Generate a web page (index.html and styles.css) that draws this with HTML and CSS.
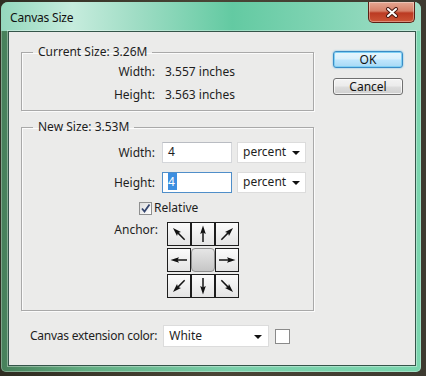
FILE: index.html
```html
<!DOCTYPE html>
<html lang="en">
<head>
    <meta charset="UTF-8">
    <title>Canvas Size</title>
    <link rel="stylesheet" href="styles.css">
</head>
<body>
    <!-- arrow shape used by the anchor grid -->
    <svg class="defs" width="0" height="0">
        <symbol id="arrow" viewBox="0 0 22 22">
            <line x1="11" y1="19" x2="11" y2="8" stroke="#151515" stroke-width="1.5"/>
            <polygon points="11,2.5 8.2,11 11,9.5 13.8,11" fill="#111"/>
        </symbol>
    </svg>

    <div class="window">
        <div class="titlebar">
            <span class="title">Canvas Size</span>
            <button class="close">
                <svg width="14" height="11" viewBox="0 0 14 11">
                    <path d="M3 2 L11 9 M11 2 L3 9" stroke="#4a1a12" stroke-width="4" stroke-linecap="round"/>
                    <path d="M3 2 L11 9 M11 2 L3 9" stroke="#fff" stroke-width="2" stroke-linecap="round"/>
                </svg>
            </button>
        </div>

        <div class="client">
            <div class="main">
                <!-- Current Size -->
                <fieldset class="group current">
                    <legend>Current Size: 3.26M</legend>
                    <div class="info-row"><span class="label">Width:</span><span class="value">3.557 inches</span></div>
                    <div class="info-row"><span class="label">Height:</span><span class="value">3.563 inches</span></div>
                </fieldset>

                <!-- New Size -->
                <fieldset class="group new">
                    <legend>New Size: 3.53M</legend>
                    <div class="field-row">
                        <span class="label">Width:</span>
                        <div class="input">4</div>
                        <div class="select">percent<span class="caret"></span></div>
                    </div>
                    <div class="field-row">
                        <span class="label">Height:</span>
                        <div class="input focused"><span class="selected">4</span></div>
                        <div class="select">percent<span class="caret"></span></div>
                    </div>
                    <div class="check-row">
                        <span class="checkbox">
                            <svg width="11" height="11" viewBox="0 0 11 11">
                                <polyline points="2,5.5 4.5,8.5 9.5,1.5" fill="none" stroke="#34456e" stroke-width="1.8"/>
                            </svg>
                        </span>
                        <span>Relative</span>
                    </div>
                    <div class="anchor-row">
                        <span class="label anchor-label">Anchor:</span>
                        <div class="anchor">
                            <div class="cell"><svg><use href="#arrow" transform="rotate(-45 11 11)"/></svg></div>
                            <div class="cell"><svg><use href="#arrow"/></svg></div>
                            <div class="cell"><svg><use href="#arrow" transform="rotate(45 11 11)"/></svg></div>
                            <div class="cell"><svg><use href="#arrow" transform="rotate(-90 11 11)"/></svg></div>
                            <div class="cell center"></div>
                            <div class="cell"><svg><use href="#arrow" transform="rotate(90 11 11)"/></svg></div>
                            <div class="cell"><svg><use href="#arrow" transform="rotate(-135 11 11)"/></svg></div>
                            <div class="cell"><svg><use href="#arrow" transform="rotate(180 11 11)"/></svg></div>
                            <div class="cell"><svg><use href="#arrow" transform="rotate(135 11 11)"/></svg></div>
                        </div>
                    </div>
                </fieldset>

                <!-- Extension color -->
                <div class="ext-row">
                    <span class="ext-label">Canvas extension color:</span>
                    <div class="select wide">White<span class="caret"></span></div>
                    <span class="swatch"></span>
                </div>
            </div>

            <div class="buttons">
                <button class="btn ok">OK</button>
                <button class="btn">Cancel</button>
            </div>
        </div>
    </div>
</body>
</html>
```

FILE: styles.css
```css
/* General */
html, body {
    margin: 0;
    padding: 0;
}

body {
    width: 426px;
    height: 376px;
    overflow: hidden;
    background: linear-gradient(to right, #2f2d22, #4a4536 50%, #3d3a30);
    font-family: "Noto Sans", "DejaVu Sans", sans-serif;
    font-size: 12px;
    line-height: 16px;
    color: #1e1e1e;
}

.defs {
    display: block;
    width: 0;
    height: 0;
    overflow: hidden;
}

/* Window frame */
.window {
    margin: 2px 5px 0 1px;
    height: 370px;
    box-sizing: border-box;
    padding: 0 5px 6px 7px;
    border-radius: 7px 7px 5px 5px;
    background: linear-gradient(to right, #47805a 0%, #62ad82 20%, #7bd0ab 55%, #7ad5ae 100%);
    box-shadow: inset 0 0 0 1px rgba(255, 255, 255, 0.3);
    display: flex;
    flex-direction: column;
}

.titlebar {
    height: 29px;
    margin: 0 -5px 0 -7px;
    padding: 0 6px 0 9px;
    border-radius: 7px 7px 0 0;
    background: linear-gradient(to right, #94d8bd 0%, #c6ecdd 17%, #a0ddc5 32%, #63caa2 55%, #7ed3b2 75%, #a2dec7 100%);
    display: flex;
    justify-content: space-between;
    align-items: center;
}

.title {
    color: #111;
    margin-top: 2px;
    letter-spacing: -0.2px;
}

.close {
    align-self: flex-start;
    width: 47px;
    height: 21px;
    padding: 0;
    border: 1px solid #5c1f15;
    border-top: none;
    border-radius: 0 0 5px 5px;
    background: linear-gradient(#e4a792 0%, #d68068 45%, #bb3a22 55%, #cc5536 100%);
    box-shadow: inset 0 0 0 1px rgba(255, 255, 255, 0.35);
    display: flex;
    align-items: center;
    justify-content: center;
}

/* Client area */
.client {
    flex: 1;
    background: #ebebea;
    border: 1px solid #35554a;
    box-shadow: 0 0 0 1px rgba(255, 255, 255, 0.35);
    display: flex;
}

.main {
    width: 293px;
    padding-left: 12px;
}

.group {
    margin: 0;
    padding: 0 0 4px 0;
    border: 1px solid #a9a9a9;
    box-shadow: inset 1px 1px #fbfbfb, 1px 1px #fbfbfb;
}

.group legend {
    margin-left: 11px;
    padding: 0 5px;
    line-height: 16px;
}

.current {
    margin-top: 12px;
}

.new {
    margin-top: 8px;
    padding-bottom: 12px;
}

.label {
    width: 133px;
    text-align: right;
    flex-shrink: 0;
}

.info-row {
    display: flex;
    align-items: center;
    height: 23px;
}

.info-row .value {
    margin-left: 10px;
}

/* Fields */
.field-row {
    display: flex;
    align-items: center;
    margin-top: 7px;
}

.field-row + .field-row {
    margin-top: 9px;
}

.input {
    width: 70px;
    height: 21px;
    box-sizing: border-box;
    margin-left: 7px;
    padding: 1px 5px;
    background: #fff;
    border: 1px solid #d4d6da;
    border-top-color: #b9bcc2;
}

.input.focused {
    border-color: #4f8ec9;
}

.selected {
    background: #3c8ee0;
    color: #fff;
    padding: 0 2px 0 0;
}

.select {
    position: relative;
    width: 69px;
    height: 21px;
    box-sizing: border-box;
    margin-left: 5px;
    padding: 1px 5px;
    background: #fff;
    border: 1px solid #dcdcdc;
}

.caret {
    position: absolute;
    right: 5px;
    top: 8px;
    border-left: 4px solid transparent;
    border-right: 4px solid transparent;
    border-top: 4px solid #111;
}

.check-row {
    display: flex;
    align-items: center;
    margin: 7px 0 0 117px;
    gap: 2px;
}

.checkbox {
    width: 13px;
    height: 13px;
    box-sizing: border-box;
    border: 1px solid #8e8f8f;
    background: linear-gradient(135deg, #dcdcdc, #ffffff);
    display: flex;
    align-items: center;
    justify-content: center;
}

/* Anchor grid */
.anchor-row {
    display: flex;
    align-items: flex-start;
    margin-top: 6px;
}

.anchor-label {
    width: 136px;
}

.anchor {
    margin-left: 9px;
    display: grid;
    grid-template-columns: repeat(3, 24px);
    grid-auto-rows: 24px;
    row-gap: 2px;
}

.cell {
    box-sizing: border-box;
    border: 1px solid #1d1d1d;
    background: linear-gradient(#fbfbfb, #e4e4e4);
}

.cell svg {
    display: block;
    width: 22px;
    height: 22px;
}

.cell.center {
    border: 1px solid #8d8d8d;
    border-radius: 4px;
    background: linear-gradient(#e6e6e6, #c6c6c6);
}

/* Extension color row */
.ext-row {
    display: flex;
    align-items: center;
    margin-top: 14px;
    padding-left: 9px;
}

.ext-label {
    letter-spacing: -0.25px;
}

.select.wide {
    width: 106px;
    height: 22px;
    margin-left: 6px;
    padding-top: 2px;
}

.select.wide .caret {
    right: 6px;
    top: 9px;
}

.swatch {
    width: 15px;
    height: 15px;
    box-sizing: border-box;
    margin-left: 6px;
    border: 1px solid #8a8a8a;
    background: #fff;
}

/* Buttons */
.buttons {
    margin-left: 19px;
    padding-top: 19px;
    display: flex;
    flex-direction: column;
    gap: 10px;
}

.btn {
    width: 70px;
    height: 17px;
    padding: 0;
    font-family: inherit;
    font-size: 12px;
    line-height: 14px;
    color: #111;
    border: 1px solid #707070;
    border-radius: 3px;
    background: linear-gradient(#f3f3f3 0%, #ebebeb 48%, #dddddd 52%, #cfcfcf 100%);
    box-shadow: inset 0 0 0 1px rgba(255, 255, 255, 0.7);
}

.btn.ok {
    border-color: #3a8cc6;
    background: linear-gradient(#e8f6fd 0%, #d9f0fc 48%, #bee6fd 52%, #a7d9f5 100%);
    box-shadow: inset 0 0 0 1px #7fd0f4, 0 0 2px #5ab8e8;
}
```
